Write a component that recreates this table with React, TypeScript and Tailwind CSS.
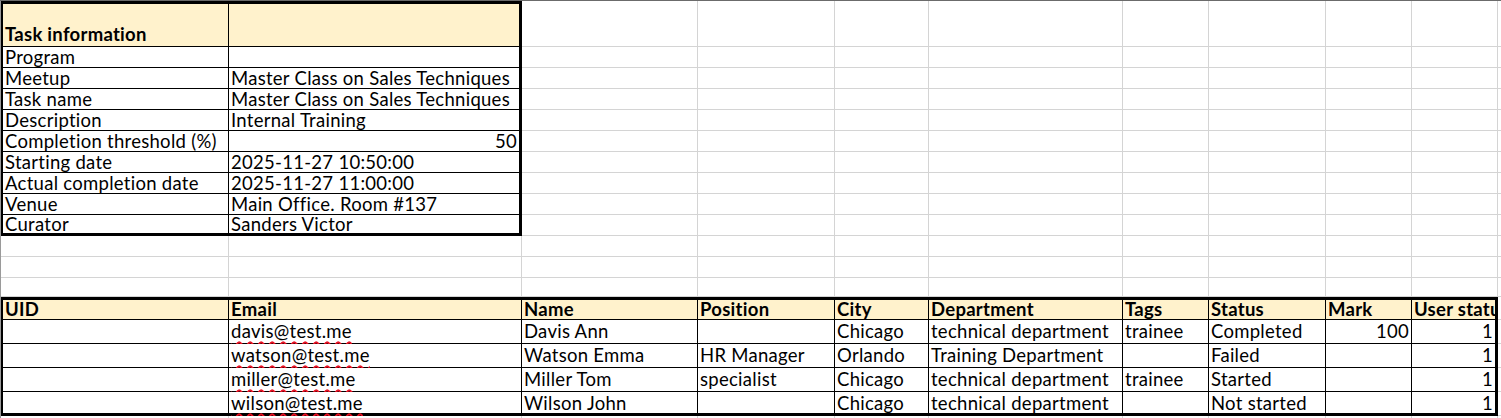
import type { ReactNode } from "react";

// column widths A..J (K takes the rest of the window)
const COL_W = [
  "w-[228px]",
  "w-[293px]",
  "w-[176px]",
  "w-[137px]",
  "w-[94px]",
  "w-[194px]",
  "w-[86px]",
  "w-[117px]",
  "w-[86px]",
  "w-[86px]",
];

type Edges = { l?: boolean; t?: boolean; r?: boolean; b?: boolean };

interface CellProps {
  col: number;
  boxed?: boolean;
  edges?: Edges;
  fill?: boolean;
  bold?: boolean;
  right?: boolean;
  clip?: boolean;
  pad?: string;
  children?: ReactNode;
}

const Cell = ({ col, boxed, edges = {}, fill, bold, right, clip, pad = "pb-0 leading-[20px]", children }: CellProps) => {
  const width = col < COL_W.length ? COL_W[col] + " shrink-0" : "flex-1 min-w-0";
  const color = boxed ? "border-black" : "border-[#d4d4d4]";
  return (
    <div
      className={[
        "flex items-end whitespace-nowrap px-[2px]",
        clip ? "overflow-hidden" : "",
        width,
        color,
        edges.r ? "border-r-[3px]" : "border-r",
        edges.b ? "border-b-[3px]" : "border-b",
        edges.l ? "border-l-2" : "",
        edges.t ? "border-t-[3px]" : "",
        fill ? "bg-[#fff2cc]" : "bg-white",
        bold ? "font-bold" : "",
        right ? "justify-end" : "justify-start",
        pad,
      ].join(" ")}
    >
      {children}
    </div>
  );
};

const Blank = ({ from = 0 }: { from?: number }) => (
  <>
    {Array.from({ length: 11 - from }, (_, k) => (
      <Cell key={k} col={from + k} />
    ))}
  </>
);

const info: [string, string, boolean?][] = [
  ["Program", ""],
  ["Meetup", "Master Class on Sales Techniques"],
  ["Task name", "Master Class on Sales Techniques"],
  ["Description", "Internal Training"],
  ["Completion threshold (%)", "50", true],
  ["Starting date", "2025-11-27 10:50:00"],
  ["Actual completion date", "2025-11-27 11:00:00"],
  ["Venue", "Main Office. Room #137"],
  ["Curator", "Sanders Victor"],
];

const headers = ["UID", "Email", "Name", "Position", "City", "Department", "Tags", "Status", "Mark", "User status"];

const people = [
  ["", "davis@test.me", "Davis Ann", "", "Chicago", "technical department", "trainee", "Completed", "100", "1"],
  ["", "watson@test.me", "Watson Emma", "HR Manager", "Orlando", "Training Department", "", "Failed", "", "1"],
  ["", "miller@test.me", "Miller Tom", "specialist", "Chicago", "technical department", "trainee", "Started", "", "1"],
  ["", "wilson@test.me", "Wilson John", "", "Chicago", "technical department", "", "Not started", "", "1"],
];

export default function App() {
  return (
    <div className="w-[1501px] h-[418px] overflow-hidden bg-white text-black font-['Lato',sans-serif] text-[18.5px] tracking-[0.28px]">
      <div className="h-px bg-[#6b6b6b]" />
      <div className="flex">
        <div className="w-px shrink-0 bg-[#9a9a9a]" />
        <div className="flex-1 flex flex-col">
          {/* task information block */}
          <div className="flex h-[46px]">
            <Cell col={0} boxed fill bold edges={{ l: true, t: true }} pad="pb-[2px] leading-[20px]">
              Task information
            </Cell>
            <Cell col={1} boxed fill edges={{ r: true, t: true }} />
            <Blank from={2} />
          </div>
          {info.map(([label, value, num], i) => {
            const last = i === info.length - 1;
            const pad = last ? "pb-0 leading-[18px]" : "pb-0 leading-[20px]";
            return (
              <div key={label} className="flex h-[21px]">
                <Cell col={0} boxed edges={{ l: true, b: last }} pad={pad}>
                  {label}
                </Cell>
                <Cell col={1} boxed right={num} edges={{ r: true, b: last }} pad={pad}>
                  {value}
                </Cell>
                <Blank from={2} />
              </div>
            );
          })}

          <div className="flex h-[21px]">
            <Blank />
          </div>
          <div className="flex h-[21px]">
            <Blank />
          </div>
          <div className="flex h-[19px]">
            <Blank />
          </div>

          {/* participants */}
          <div className="flex h-[23px]">
            {headers.map((h, c) => (
              <Cell
                key={h}
                col={c}
                boxed
                fill
                bold
                clip={c === 9}
                edges={{ t: true, l: c === 0, r: c === 9 }}
                pad="pb-px leading-[18px]"
              >
                {h}
              </Cell>
            ))}
            <Cell col={10} />
          </div>
          {people.map((row, i) => {
            const last = i === people.length - 1;
            return (
              <div key={row[1]} className="flex h-[24px]">
                {row.map((v, c) => (
                  <Cell
                    key={c}
                    col={c}
                    boxed
                    right={c >= 8}
                    edges={{ l: c === 0, r: c === 9, b: last }}
                    pad={last ? "pb-0 leading-[20px]" : "pb-[2px] leading-[20px]"}
                  >
                    {c === 1 ? (
                      <span className="underline decoration-wavy decoration-[#e81123] decoration-[1.5px] underline-offset-[3px]">
                        {v}
                      </span>
                    ) : (
                      v
                    )}
                  </Cell>
                ))}
                <Cell col={10} />
              </div>
            );
          })}
          <div className="flex h-[21px]">
            <Blank />
          </div>
        </div>
      </div>
    </div>
  );
}
